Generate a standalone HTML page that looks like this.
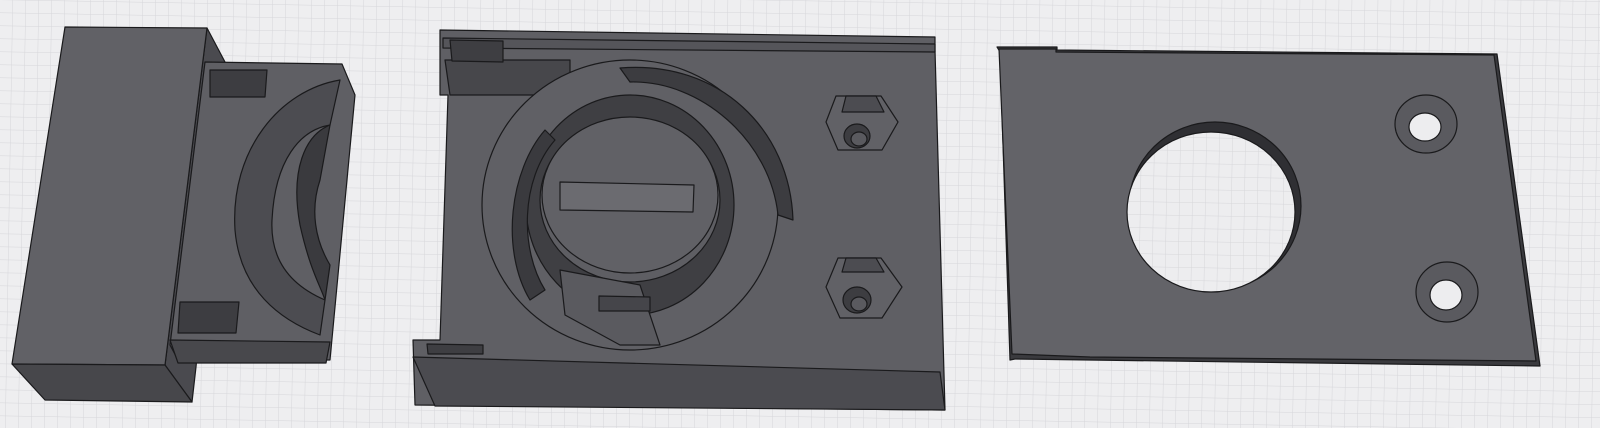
<!DOCTYPE html><html><head><style>
html,body{margin:0;padding:0;width:1600px;height:428px;overflow:hidden;background:#ededef}
</style></head><body>
<svg width="1600" height="428" viewBox="0 0 1600 428" xmlns="http://www.w3.org/2000/svg">
<defs>
<pattern id="g" width="13" height="13" patternUnits="userSpaceOnUse" patternTransform="rotate(1)">
<path d="M13 0V13M0 13H13" stroke="#d6d6da" stroke-width="1" fill="none"/>
</pattern>
</defs>
<rect width="1600" height="428" fill="#eeeef0"/>
<rect width="1600" height="428" fill="url(#g)"/>
<g stroke="#1a1a1c" stroke-width="1.2" stroke-linejoin="round">
<!-- LEFT PART -->
<polygon points="207,28 225,62 196,367 192,402 165,365" fill="#4a4a4f"/>
<polygon points="205,62 342,64 355,95 330,360 178,360 170,345" fill="#5f5f64"/>
<polygon points="170,340 330,342 326,363 178,363" fill="#48484c"/>
<polygon points="65,27 207,28 165,365 12,364" fill="#616166"/>
<polygon points="12,364 165,365 192,402 45,400" fill="#47474b"/>
<polygon points="210,70 267,70 265,97 210,97" fill="#3d3d41"/>
<polygon points="180,302 239,302 236,333 178,333" fill="#3d3d41"/>
<path d="M340,80 C280,90 230,150 235,230 C240,290 280,320 320,335 L325,300 C290,285 270,260 272,220 C275,160 300,130 330,125 Z" fill="#4c4c51"/>
<path d="M330,125 C305,135 290,170 300,225 C310,270 320,285 325,300 L330,265 C315,240 310,210 320,180 Z" fill="#3a3a3e"/>
<!-- MIDDLE PART -->
<polygon points="440,30 935,37 935,50 945,410 415,405 413,340 440,340 448,95 440,95" fill="#5f5f64"/>
<polygon points="443,38 935,44 935,52 443,48" fill="#55555a"/>
<polygon points="445,60 570,60 570,95 450,95" fill="#47474b"/>
<polygon points="450,40 503,41 503,62 452,61" fill="#3e3e42"/>
<polygon points="413,357 940,372 945,410 435,406" fill="#4b4b50"/>
<polygon points="427,344 483,345 483,354 428,354" fill="#3e3e42"/>
<ellipse cx="630" cy="205" rx="148" ry="145" fill="#606065"/>
<path d="M620,68 C720,60 790,130 793,220 L778,215 C770,140 700,80 630,82 Z" fill="#3c3c40"/>
<ellipse cx="630" cy="205" rx="104" ry="110" fill="#3f3f43"/>
<path d="M545,130 C510,170 500,250 530,300 L545,290 C520,250 520,180 555,140 Z" fill="#3a3a3e"/>
<ellipse cx="630" cy="200" rx="90" ry="82" fill="#5e5e63"/>
<ellipse cx="630" cy="195" rx="88" ry="78" fill="#616166"/>
<polygon points="560,182 694,185 693,212 560,210" fill="#6b6b70"/>
<polygon points="560,270 640,285 660,345 620,345 565,315" fill="#5a5a5f"/>
<polygon points="599,296 650,297 650,311 599,311" fill="#45454a"/>
<polygon points="836,96 881,96 898,122 882,150 838,150 826,122" fill="#616166"/>
<polygon points="846,96 876,96 884,112 842,112" fill="#4c4c51"/>
<ellipse cx="857" cy="136" rx="13" ry="12" fill="#3d3d41"/>
<ellipse cx="859" cy="139" rx="8" ry="7" fill="#5a5a5f"/>
<polygon points="838,258 881,258 902,287 882,318 840,318 826,287" fill="#616166"/>
<polygon points="846,258 876,258 884,272 842,272" fill="#4c4c51"/>
<ellipse cx="857" cy="300" rx="14" ry="13" fill="#3d3d41"/>
<ellipse cx="859" cy="304" rx="8" ry="7" fill="#5a5a5f"/>
<!-- RIGHT PART -->
<polygon points="997,47 1057,47 1057,50 1497,54 1540,366 1015,359 1010,360 1000,52" fill="#3a3a3e"/>
<polygon points="999,49 1056,49 1056,52 1494,55 1536,361 1090,357 1012,354" fill="#636368"/>
<ellipse cx="1215" cy="206" rx="86" ry="84" fill="#2f2f33"/>
<ellipse cx="1211" cy="212" rx="84" ry="80" fill="#ededef" stroke="none"/>
<ellipse cx="1211" cy="212" rx="84" ry="80" fill="url(#g)" stroke="#1a1a1c"/>
<ellipse cx="1426" cy="124" rx="31" ry="29" fill="#5a5a5f"/>
<ellipse cx="1425" cy="127" rx="16" ry="14" fill="#ededef"/>
<ellipse cx="1447" cy="292" rx="31" ry="30" fill="#5a5a5f"/>
<ellipse cx="1446" cy="295" rx="16" ry="15" fill="#ededef"/>
</g>
</svg>
</body></html>
